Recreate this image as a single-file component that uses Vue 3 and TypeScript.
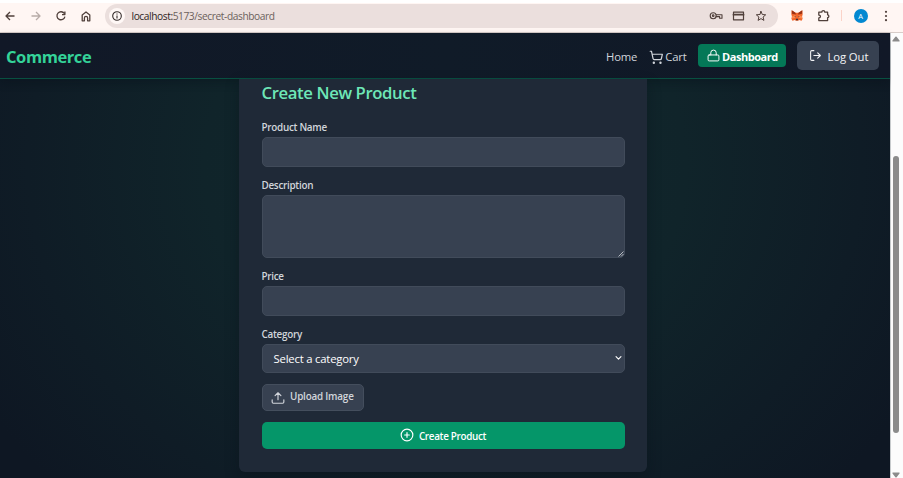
<script setup lang="ts">
import { ref } from 'vue'

interface TextField {
  id: string
  label: string
  kind: 'input' | 'textarea'
}

const fields: TextField[] = [
  { id: 'name', label: 'Product Name', kind: 'input' },
  { id: 'description', label: 'Description', kind: 'textarea' },
  { id: 'price', label: 'Price', kind: 'input' },
]

const category = ref('Select a category')
</script>

<template>
  <div class="window">
    <div class="toolbar">
      <svg class="nav-icon" viewBox="0 0 12 12"><path d="M10.5 6H2M6 2 2 6l4 4" /></svg>
      <svg class="nav-icon faded" viewBox="0 0 12 12"><path d="M1.5 6H10M6 2l4 4-4 4" /></svg>
      <svg class="nav-icon" viewBox="0 0 12 12"><path d="M9.3 3.5A4 4 0 1 0 9.9 6.6M9.9 1.6v3H7" /></svg>
      <svg class="nav-icon home-icon" viewBox="0 0 12 12"><path d="M2.2 4.9 6 1.9l3.8 3V10.8H7.6V8a1.6 1.6 0 0 0-3.2 0v2.8H2.2Z" /></svg>
      <div class="address">
        <span class="info">
          <svg viewBox="0 0 12 12"><circle cx="6" cy="6" r="4.3" /><path d="M6 5.4v3M6 3.4v1.1" /></svg>
        </span>
        <span class="url"><span class="host">localhost:</span>5173/secret-dashboard</span>
        <svg class="key" viewBox="0 0 14 10"><circle cx="4.2" cy="4.7" r="3" /><circle cx="4.2" cy="4.7" r=".8" /><path d="M7.2 3.7H13v3.6h-2.4V5.6H7.2" /></svg>
        <svg class="cardicon" viewBox="0 0 12 10"><path d="M1 1.2h10v7.6H1Z" /><path class="thick" d="M1 3.7h10" /></svg>
        <svg class="star" viewBox="0 0 12 12"><path d="m6 1.4 1.3 3.1 3.4.3-2.6 2.2.8 3.4L6 8.6l-2.9 1.8.8-3.4L1.3 4.8l3.4-.3Z" /></svg>
      </div>
      <svg class="fox" viewBox="0 0 12 11">
        <path fill="#f0652a" d="M.7.3 4.5 2.8h3L11.3.3l.4 3.6-.6 2.6.5 2.2-1 2-2.5-.6-1 .7H4.9l-1-.7-2.5.6-1-2 .5-2.2L.3 3.9Z" />
        <path fill="#9c3214" d="m.7.3 3.8 2.5.4 1.7L1 3.8ZM11.3.3 7.5 2.8l-.4 1.7L11 3.8Z" />
        <path fill="#ff8a4c" d="M1 6.5 4.2 5l.4 2.8-3.6.6ZM11 6.5 7.8 5l-.4 2.8 3.6.6Z" />
        <path fill="#37313b" d="m3.2 6 1.4.5.1.9ZM8.8 6l-1.4.5-.1.9ZM5 8.8h2l.2 1.4H4.8Z" />
      </svg>
      <svg class="puzzle" viewBox="0 0 13 13"><path d="M1.8 3.2h3c0-2.2 3-2.2 3 0h2.8v2.6c1.7 0 1.7 2.8 0 2.8v3H1.8V9c2.2 0 2.2-2.9 0-2.9Z" /></svg>
      <span class="divider"></span>
      <span class="avatar">A</span>
      <svg class="dots" viewBox="0 0 4 12"><circle cx="2" cy="1.8" r="1.1" /><circle cx="2" cy="6" r="1.1" /><circle cx="2" cy="10.2" r="1.1" /></svg>
    </div>

    <div class="viewport">
      <div class="page">
        <header class="header">
          <a class="brand">Commerce</a>
          <nav class="nav">
            <a class="link home">Home</a>
            <a class="link cart">
              <svg viewBox="0 0 24 24"><circle cx="8" cy="21" r="1" /><circle cx="19" cy="21" r="1" /><path d="M2.05 2.05h2l2.66 12.42a2 2 0 0 0 2 1.58h9.78a2 2 0 0 0 1.95-1.57l1.65-7.43H5.12" /></svg>
              <span>Cart</span>
            </a>
            <a class="dashboard">
              <svg viewBox="0 0 24 24"><rect width="20" height="11" x="2" y="11" rx="2" /><path d="M7 11V7a5 5 0 0 1 10 0v4" /></svg>
              <span>Dashboard</span>
            </a>
            <button class="logout">
              <svg viewBox="0 0 24 24"><path d="M9 21H5a2 2 0 0 1-2-2V5a2 2 0 0 1 2-2h4M16 17l5-5-5-5M21 12H9" /></svg>
              <span>Log Out</span>
            </button>
          </nav>
        </header>

        <main class="card">
          <h2 class="title">Create New Product</h2>
          <form class="form" @submit.prevent>
            <div v-for="field in fields" :key="field.id" class="field">
              <label :for="field.id">{{ field.label }}</label>
              <input v-if="field.kind === 'input'" :id="field.id" class="control" type="text" />
              <div v-else :id="field.id" class="control area">
                <svg viewBox="0 0 6 6"><path d="M.8 5.2 5.2.8M3.3 5.2l1.9-1.9" /></svg>
              </div>
            </div>
            <div class="field">
              <label>Category</label>
              <div class="control select">
                <span>{{ category }}</span>
                <svg viewBox="0 0 8 6"><path d="m1.2 1.4 2.8 2.8 2.8-2.8" /></svg>
              </div>
            </div>
            <button class="upload" type="button">
              <svg viewBox="0 0 24 24"><path d="M22 15v4a2 2 0 0 1-2 2H4a2 2 0 0 1-2-2v-4M17 8l-5-5-5 5M12 3v12" /></svg>
              <span>Upload Image</span>
            </button>
            <button class="submit" type="submit">
              <svg viewBox="0 0 24 24"><circle cx="12" cy="12" r="10" /><path d="M8 12h8M12 8v8" /></svg>
              <span>Create Product</span>
            </button>
          </form>
        </main>
      </div>
      <div class="scrollbar">
        <svg class="arrow" viewBox="0 0 8 6"><path d="M1 5.5h6a.6.6 0 0 0 .5-1L4.6.8a.8.8 0 0 0-1.2 0L.5 4.5a.6.6 0 0 0 .5 1Z" /></svg>
        <span class="thumb"></span>
        <svg class="arrow down" viewBox="0 0 8 6"><path d="M1 5.5h6a.6.6 0 0 0 .5-1L4.6.8a.8.8 0 0 0-1.2 0L.5 4.5a.6.6 0 0 0 .5 1Z" /></svg>
      </div>
    </div>
  </div>
</template>

<style>
body {
  margin: 0;
  overflow: hidden;
}
</style>

<style scoped>
* {
  box-sizing: border-box;
}

.window {
  width: 903px;
  height: 478px;
  overflow: hidden;
  display: flex;
  flex-direction: column;
  background: #fff;
  font-family: 'Open Sans', 'Noto Sans', sans-serif;
  font-size: 11.3px;
}

svg {
  display: block;
  flex: none;
  fill: none;
  stroke: currentColor;
  stroke-width: 2;
  stroke-linecap: round;
  stroke-linejoin: round;
}

button {
  font-family: inherit;
  margin: 0;
}

span, label {
  white-space: nowrap;
}

/* Browser toolbar */
.toolbar {
  height: 30px;
  margin-top: 3px;
  flex: none;
  display: flex;
  align-items: center;
  padding: 0 0 4px 4px;
  background: #fff6f3;
  border-bottom: 1px solid #d8cdc9;
  color: #50403b;
}

.nav-icon {
  width: 12px;
  height: 12px;
  margin-right: 13.5px;
  stroke-width: 1.3;
  stroke-linecap: butt;
}

.home-icon {
  margin: 0 14.5px 0 -1px;
}

.faded {
  color: #b8aca8;
}

.address {
  width: 673px;
  height: 24px;
  margin-left: -1px;
  flex: none;
  display: flex;
  align-items: center;
  padding: 0 11px 0 4px;
  border-radius: 12px;
  background: #ebdfdd;
}

.info {
  width: 16px;
  height: 16px;
  display: grid;
  place-items: center;
  border-radius: 50%;
  background: #fff8f6;
  color: #332b29;
}

.info svg {
  width: 12px;
  height: 12px;
  stroke-width: 1.1;
  stroke-linecap: butt;
}

.url {
  flex: 1;
  margin-left: 6.5px;
  font-size: 10.2px;
  line-height: 16px;
  letter-spacing: -0.42px;
  color: #6b5f5c;
}

.host {
  color: #2d2523;
}

.key {
  width: 14px;
  height: 10px;
  stroke-width: 1.1;
}

.cardicon {
  width: 13px;
  height: 10px;
  margin-left: 9px;
  stroke-width: 1.2;
}

.thick {
  stroke-width: 1.8;
}

.star {
  width: 12px;
  height: 12px;
  margin-left: 10px;
  stroke-width: 1;
}

.fox {
  width: 12px;
  height: 11px;
  margin-left: 13px;
  stroke: none;
}

.puzzle {
  width: 13px;
  height: 13px;
  margin-left: 14px;
  stroke-width: 1.3;
}

.divider {
  width: 1px;
  height: 11px;
  margin-left: 11px;
  background: #fbd3c8;
}

.avatar {
  width: 14px;
  height: 14px;
  margin-left: 11.5px;
  border-radius: 50%;
  background: #0288d1;
  color: #fff;
  font-size: 7.5px;
  line-height: 14px;
  text-align: center;
}

.dots {
  width: 4px;
  height: 12px;
  margin-left: 16.5px;
  fill: currentColor;
  stroke: none;
}

/* Web page */
.viewport {
  flex: 1;
  display: flex;
  min-height: 0;
}

.page {
  width: 891px;
  flex: none;
  display: flex;
  flex-direction: column;
  align-items: center;
  background: radial-gradient(ellipse 60% 105% at 50% 30%, #11292d 0%, #10242a 45%, #0f1c26 78%, #0e1723 100%);
  border-right: 1px solid #c7cbcd;
}

.header {
  width: 100%;
  height: 46px;
  flex: none;
  display: flex;
  align-items: center;
  justify-content: space-between;
  padding: 0 11px 0 6px;
  background: linear-gradient(90deg, #111827 0%, #101b28 50%, #111827 100%);
  border-bottom: 1px solid #085041;
  box-shadow: 0 4px 8px rgba(8, 14, 24, 0.3);
}

.brand {
  font-size: 16.5px;
  font-weight: 700;
  line-height: 24px;
  padding-top: 2px;
  color: #34d399;
  letter-spacing: -0.42px;
}

.nav {
  display: flex;
  align-items: center;
}

.link {
  display: flex;
  align-items: center;
  color: #d1d5db;
  line-height: 18px;
  letter-spacing: -0.2px;
  padding-top: 2px;
}

.cart {
  margin-left: 11.5px;
}

.cart svg {
  width: 14.5px;
  height: 14.5px;
  margin: 2px 2px 0 0;
}

.dashboard {
  width: 88px;
  height: 23px;
  margin-left: 11.5px;
  padding: 0 0 0 8.5px;
  display: flex;
  align-items: center;
  border-radius: 4px;
  background: #047857;
  color: #fff;
  font-weight: 700;
  font-size: 11px;
  letter-spacing: -0.45px;
}

.dashboard svg {
  width: 13px;
  height: 13px;
  margin-right: 2.5px;
  stroke-width: 1.8;
}

.dashboard span,
.logout span {
  padding-top: 1px;
}

.logout {
  width: 82px;
  height: 29px;
  margin-left: 11px;
  padding: 0 0 0 11.5px;
  display: flex;
  align-items: center;
  border: 0;
  border-radius: 5px;
  background: #374151;
  color: #f3f4f6;
  font-size: 11.3px;
  letter-spacing: -0.1px;
}

.logout svg {
  width: 13px;
  height: 13px;
  margin-right: 6px;
}

.card {
  width: 408px;
  height: 392.5px;
  flex: none;
  margin-right: 4px;
  padding: 0 22.5px;
  border-radius: 0 0 6px 6px;
  background: #1f2937;
  box-shadow: 0 6px 14px rgba(8, 14, 24, 0.35);
}

.title {
  margin: 0 0 14px;
  font-size: 16.7px;
  font-weight: 600;
  line-height: 27px;
  letter-spacing: -0.38px;
  color: #6ee7b7;
}

.form {
  display: flex;
  flex-direction: column;
  gap: 11px;
}

.field {
  display: flex;
  flex-direction: column;
}

label {
  height: 16px;
  margin-bottom: 1px;
  font-size: 9.9px;
  font-weight: 600;
  line-height: 15px;
  letter-spacing: -0.28px;
  color: #d1d5db;
}

.control {
  width: 100%;
  height: 29.5px;
  padding: 0 2px 0 11px;
  border: 1px solid #414b5a;
  border-radius: 5px;
  background: #374151;
  outline: none;
}

.area {
  height: 63.5px;
  display: flex;
  align-items: flex-end;
  justify-content: flex-end;
  padding: 0;
}

.area svg {
  width: 6px;
  height: 6px;
  stroke: #c5c9ce;
  stroke-width: 0.9;
}

.select {
  height: 29px;
  display: flex;
  align-items: center;
  justify-content: space-between;
  color: #fff;
  letter-spacing: -0.2px;
}

.select svg {
  width: 7px;
  height: 6px;
  stroke-width: 1.3;
}

.upload {
  width: 102px;
  height: 27px;
  align-self: flex-start;
  display: flex;
  align-items: center;
  padding: 0 0 0 8.5px;
  border: 1px solid #444e5d;
  border-radius: 5px;
  background: #374151;
  color: #d1d5db;
  font-size: 9.9px;
  font-weight: 600;
  letter-spacing: -0.2px;
}

.upload svg {
  width: 14px;
  height: 14px;
  margin: 1px 5px 0 0;
}

.upload span {
  padding-bottom: 2px;
}

.submit {
  height: 27px;
  display: flex;
  align-items: center;
  justify-content: center;
  border: 0;
  border-radius: 5px;
  background: #059669;
  color: #fff;
  font-size: 9.9px;
  font-weight: 600;
  letter-spacing: -0.32px;
}

.submit svg {
  width: 14px;
  height: 14px;
  margin-right: 5px;
}

.submit span {
  padding-top: 2px;
}

/* Scrollbar */
.scrollbar {
  flex: 1;
  display: flex;
  flex-direction: column;
  align-items: center;
  position: relative;
  padding: 3px 2px 0 0;
  background: #fcfcfc;
}

.arrow {
  width: 8px;
  height: 6px;
  fill: #8b8b8b;
  stroke: none;
}

.thumb {
  width: 6px;
  height: 278px;
  margin: 114px 0 39px;
  border-radius: 3px;
  background: #8b8b8b;
}

.down {
  transform: rotate(180deg);
}
</style>
